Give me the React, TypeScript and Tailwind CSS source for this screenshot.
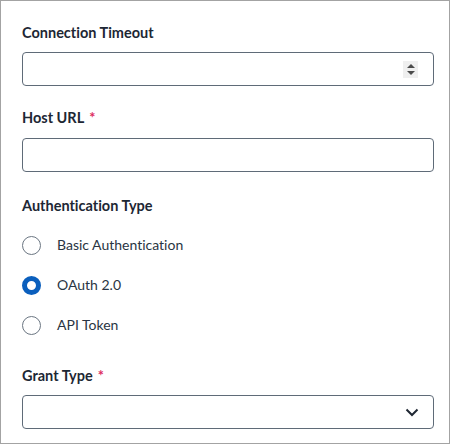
import { useState } from 'react'

const font = { fontFamily: 'Lato, "Noto Sans", sans-serif' }

const Label = ({ text, required }: { text: string; required?: boolean }) => (
  <div className="flex h-5 items-center text-[14.5px] font-bold leading-5 text-[#1d2734] [font-variant-ligatures:none]">
    {text}
    {required && <span className="ml-[5px] text-[#dd2c5f]">*</span>}
  </div>
)

const Spinner = () => (
  <div className="flex h-[17px] w-[15px] flex-col items-center justify-center gap-[3px] bg-[#efefef]">
    <svg width="8" height="4" viewBox="0 0 8 4">
      <path d="M4 0 L8 4 L0 4 Z" fill="#4b4b4b" />
    </svg>
    <svg width="8" height="4" viewBox="0 0 8 4">
      <path d="M0 0 L8 0 L4 4 Z" fill="#4b4b4b" />
    </svg>
  </div>
)

const Radio = ({
  label,
  checked,
  onClick
}: {
  label: string
  checked: boolean
  onClick: () => void
}) => (
  <div
    className="flex h-10 cursor-pointer items-center gap-[16px]"
    onClick={onClick}
  >
    {checked ? (
      <span className="box-border h-[19px] w-[19px] rounded-full border-[5px] border-[#0b5fbd] bg-white" />
    ) : (
      <span className="box-border h-[19px] w-[19px] rounded-full border border-[#6b7682] bg-white" />
    )}
    <span className="text-[14px] leading-5 text-[#2a3543] [font-variant-ligatures:none]">
      {label}
    </span>
  </div>
)

export default function App() {
  const [auth, setAuth] = useState('oauth')
  const options = [
    { id: 'basic', label: 'Basic Authentication' },
    { id: 'oauth', label: 'OAuth 2.0' },
    { id: 'token', label: 'API Token' }
  ]

  return (
    <div
      className="box-border h-[444px] w-[450px] border border-[#a3a3a3] bg-white pl-[21px] pr-[15px] pt-[22px]"
      style={font}
    >
      <Label text="Connection Timeout" />
      <div className="mt-[9px] flex h-[34px] items-center justify-end rounded-[4px] border border-[#5f6b78] pr-[15px]">
        <Spinner />
      </div>

      <div className="mt-[22px]">
        <Label text="Host URL" required />
      </div>
      <div className="mt-[10px] h-[34px] rounded-[4px] border border-[#5f6b78]" />

      <div className="mt-[24px]">
        <Label text="Authentication Type" />
      </div>
      <div className="mt-[9px] flex flex-col">
        {options.map((o) => (
          <Radio
            key={o.id}
            label={o.label}
            checked={auth === o.id}
            onClick={() => setAuth(o.id)}
          />
        ))}
      </div>

      <div className="mt-[21px]">
        <Label text="Grant Type" required />
      </div>
      <div className="mt-[9px] flex h-[34px] items-center justify-end rounded-[4px] border border-[#5f6b78] pr-[14px]">
        <svg width="14" height="9" viewBox="0 0 14 9" fill="none">
          <path d="M1.5 1.5 L7 7 L12.5 1.5" stroke="#1f2733" strokeWidth="2" />
        </svg>
      </div>
    </div>
  )
}
